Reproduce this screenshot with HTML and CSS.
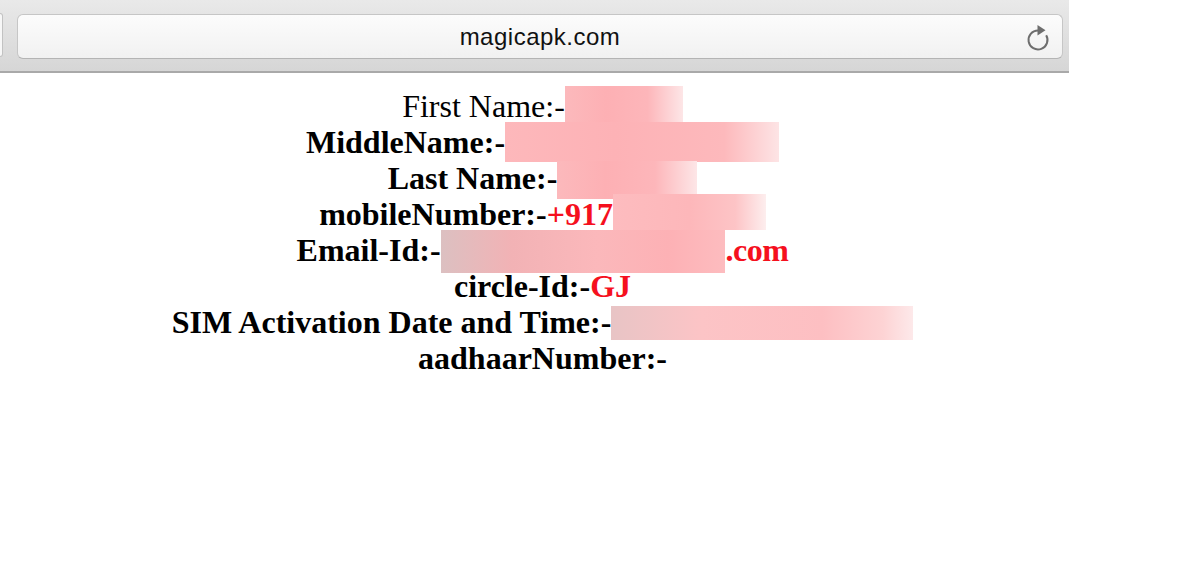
FILE: index.html
```html
<!DOCTYPE html>
<html lang="en">
<head>
<meta charset="utf-8">
<title>magicapk.com</title>
<link rel="stylesheet" href="styles.css">
</head>
<body>
<header class="toolbar">
  <div class="back-stub"></div>
  <div class="urlbar">
    <span class="spacer"></span>
    <span class="url">magicapk.com</span>
    <span class="reload">
      <svg width="26" height="30" viewBox="0 0 26 30" aria-hidden="true">
        <path d="M12 8.5 A9.5 9.5 0 1 0 20.2 13.2" fill="none" stroke="#6e6e6e" stroke-width="2"/>
        <polygon points="11.5,3 19.5,8.3 11.5,13.5" fill="#6e6e6e"/>
      </svg>
    </span>
  </div>
</header>
<main class="content">
  <div class="line">First Name:-<span class="redact r1"></span></div>
  <div class="line b">MiddleName:-<span class="redact r2"></span></div>
  <div class="line b">Last Name:-<span class="redact r3"></span></div>
  <div class="line b">mobileNumber:-<span class="red">+917</span><span class="redact r4"></span></div>
  <div class="line b">Email-Id:-<span class="redact r5"></span><span class="red dotcom">.com</span></div>
  <div class="line b">circle-Id:-<span class="red">GJ</span></div>
  <div class="line b">SIM Activation Date and Time:-<span class="redact r7"></span></div>
  <div class="line b">aadhaarNumber:-</div>
</main>
</body>
</html>
```

FILE: styles.css
```css
html, body {
  margin: 0;
  padding: 0;
  background: #ffffff;
}

body {
  width: 1200px;
  height: 564px;
  overflow: hidden;
}

.toolbar {
  width: 1069px;
  height: 71px;
  border-bottom: 2px solid #a9a9a9;
  background: linear-gradient(#e9e9e9, #d6d6d6);
  display: flex;
  align-items: center;
  box-sizing: content-box;
}

.back-stub {
  width: 2px;
  height: 42px;
  background: #f7f7f7;
  border: 1px solid #c2c2c2;
  border-left: none;
  border-radius: 0 5px 5px 0;
  margin-top: -1px;
}

.urlbar {
  margin-left: 14px;
  width: 1046px;
  height: 45px;
  box-sizing: border-box;
  border: 1px solid #c6c6c6;
  border-bottom-color: #b4b4b4;
  border-radius: 6px;
  background: linear-gradient(#fcfcfc, #f1f1f1);
  display: grid;
  grid-template-columns: 1fr auto 1fr;
  align-items: center;
  margin-top: 1px;
}

.url {
  font-family: "Liberation Sans", Arial, sans-serif;
  font-size: 24px;
  letter-spacing: 0.5px;
  color: #111111;
  line-height: 28px;
  padding-top: 1px;
}

.reload {
  justify-self: end;
  display: flex;
  padding-right: 10px;
  margin-top: 2px;
}

.content {
  width: 1085px;
  padding-top: 15px;
  text-align: center;
  font-family: "Liberation Serif", "Times New Roman", serif;
  font-size: 32px;
  line-height: 36px;
  color: #000000;
}

.line {
  height: 36px;
  white-space: nowrap;
}

.b {
  font-weight: bold;
}

.red {
  color: #f5101e;
}

.dotcom {
  margin-left: 1px;
  letter-spacing: -0.5px;
}

.redact {
  display: inline-block;
  margin-top: -6px;
  margin-bottom: -6px;
  background: linear-gradient(90deg, #fcb9bc 0%, #fdb0b4 35%, #fdb6ba 70%, #fde6e7 100%);
}

.r1 { width: 118px; height: 39px; vertical-align: -2px; }
.r2 { width: 274px; height: 40px; vertical-align: -3px;
  background: linear-gradient(90deg, #fdb8bb 0%, #fdb2b6 40%, #fdb9bc 80%, #fde4e5 100%); }
.r3 { width: 140px; height: 38px; vertical-align: -4px; }
.r4 { width: 153px; height: 36px; vertical-align: 1px;
  background: linear-gradient(90deg, #fdbcbf 0%, #fdb7ba 50%, #fdc4c6 80%, #fdeeee 100%); }
.r5 { width: 284px; height: 43px; vertical-align: -6px;
  background: linear-gradient(90deg, #dcc0c1 0%, #f2b2b5 25%, #fbb8bb 55%, #fdb1b5 80%, #fdbcbf 100%); }
.r7 { width: 302px; height: 34px; vertical-align: -1px;
  background: linear-gradient(90deg, #e8c4c5 0%, #fcc4c6 30%, #fdbfc2 70%, #fdd3d4 90%, #fde9ea 100%); }
```
